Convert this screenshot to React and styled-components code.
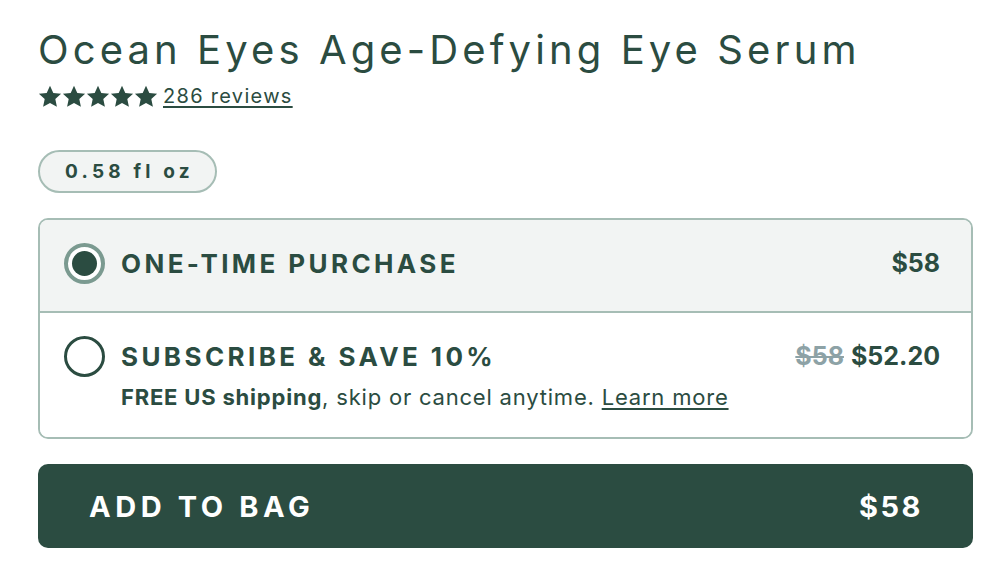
import React from "react";
import styled, { createGlobalStyle } from "styled-components";

const GREEN = "#2b4c41";
const BORDER = "#a6bdb5";
const LIGHT = "#f2f4f3";
const FONT = `"Inter", "Lato", sans-serif`;

const Global = createGlobalStyle`
  html, body { margin: 0; padding: 0; background: #fff; }
  body { font-family: ${FONT}; color: ${GREEN}; }
  * { box-sizing: border-box; }
`;

const Page = styled.div`
  width: 935px;
  margin-left: 38px;
  padding-top: 24px;
  display: flex;
  flex-direction: column;
`;

const Title = styled.h1`
  margin: 0;
  font-family: ${FONT};
  font-weight: 400;
  font-size: 40px;
  line-height: 52px;
  letter-spacing: 4.1px;
  color: ${GREEN};
`;

const RatingRow = styled.div`
  display: flex;
  align-items: center;
  gap: 5px;
  margin-top: 7px;
  height: 26px;
`;

const Stars = styled.div`
  display: flex;
`;

const Reviews = styled.a`
  font-size: 20px;
  letter-spacing: 1.3px;
  color: ${GREEN};
  text-decoration: underline;
  text-underline-offset: 3px;
  text-decoration-thickness: 1.5px;
`;

const SizePill = styled.div`
  align-self: flex-start;
  margin-top: 41px;
  height: 43px;
  padding: 0 21px 0 25px;
  display: flex;
  align-items: center;
  border: 2px solid ${BORDER};
  border-radius: 22px;
  background: ${LIGHT};
  font-size: 19px;
  font-weight: 700;
  letter-spacing: 4.2px;
`;

const Options = styled.div`
  margin-top: 25px;
  border: 2px solid ${BORDER};
  border-radius: 10px;
  overflow: hidden;
  display: flex;
  flex-direction: column;
`;

const Option = styled.div`
  display: flex;
  align-items: flex-start;
  gap: 16px;
  padding: ${(p) => p.$pad};
  background: ${(p) => (p.$selected ? LIGHT : "#fff")};
  & + & {
    border-top: 2px solid ${BORDER};
  }
`;

const Radio = styled.span`
  flex: none;
  width: 41px;
  height: 41px;
  border-radius: 50%;
  border: ${(p) => (p.$selected ? "4px solid #7b9a90" : `3.5px solid ${GREEN}`)};
  background: #fff;
  display: flex;
  align-items: center;
  justify-content: center;
  margin-top: -2px;
  &::after {
    content: "";
    display: ${(p) => (p.$selected ? "block" : "none")};
    width: 25px;
    height: 25px;
    border-radius: 50%;
    background: ${GREEN};
  }
`;

const OptionBody = styled.div`
  flex: 1;
  display: flex;
  flex-direction: column;
  gap: 10px;
`;

const OptionHead = styled.div`
  display: flex;
  justify-content: space-between;
  align-items: center;
  height: 36px;
`;

const OptionLabel = styled.span`
  font-size: 26px;
  font-weight: 700;
  letter-spacing: 3.4px;
`;

const Price = styled.span`
  font-size: 25px;
  font-weight: 700;
  display: flex;
  gap: 7px;
`;

const OldPrice = styled.s`
  color: #8da2a6;
  text-decoration-thickness: 2px;
`;

const Note = styled.div`
  font-size: 22px;
  line-height: 26px;
  letter-spacing: 0.8px;
  b { font-weight: 700; }
  a {
    color: ${GREEN};
    text-decoration: underline;
    text-underline-offset: 3px;
    text-decoration-thickness: 1.5px;
  }
`;

const AddButton = styled.button`
  margin-top: 25px;
  height: 84px;
  border: none;
  border-radius: 10px;
  background: ${GREEN};
  color: #fff;
  display: flex;
  justify-content: space-between;
  align-items: center;
  padding: 0 50px 0 51px;
  font-family: ${FONT};
  font-size: 29px;
  font-weight: 700;
  cursor: pointer;
`;

const ButtonText = styled.span`
  letter-spacing: ${(p) => p.$ls}px;
`;

const Star = () => (
  <svg width="24" height="23" viewBox="0 0 24 23">
    <path
      d="M12 0.8l3.3 7.1 7.8 0.9-5.8 5.3 1.6 7.7L12 17.9l-6.9 3.9 1.6-7.7L0.9 8.8l7.8-0.9z"
      fill={GREEN}
    />
  </svg>
);

export default function App() {
  return (
    <>
      <Global />
      <Page>
        <Title>Ocean Eyes Age-Defying Eye Serum</Title>
        <RatingRow>
          <Stars>
            {[0, 1, 2, 3, 4].map((i) => (
              <Star key={i} />
            ))}
          </Stars>
          <Reviews href="#">286 reviews</Reviews>
        </RatingRow>
        <SizePill>0.58 fl oz</SizePill>
        <Options>
          <Option $selected $pad="25px 31px 27px 24px">
            <Radio $selected />
            <OptionBody>
              <OptionHead>
                <OptionLabel>ONE-TIME PURCHASE</OptionLabel>
                <Price>$58</Price>
              </OptionHead>
            </OptionBody>
          </Option>
          <Option $pad="25px 31px 27px 24px">
            <Radio />
            <OptionBody>
              <OptionHead>
                <OptionLabel>SUBSCRIBE &amp; SAVE 10%</OptionLabel>
                <Price>
                  <OldPrice>$58</OldPrice>
                  <span>$52.20</span>
                </Price>
              </OptionHead>
              <Note>
                <b>FREE US shipping</b>, skip or cancel anytime.{" "}
                <a href="#">Learn more</a>
              </Note>
            </OptionBody>
          </Option>
        </Options>
        <AddButton>
          <ButtonText $ls={4.6}>ADD TO BAG</ButtonText>
          <ButtonText $ls={2.5}>$58</ButtonText>
        </AddButton>
      </Page>
    </>
  );
}
